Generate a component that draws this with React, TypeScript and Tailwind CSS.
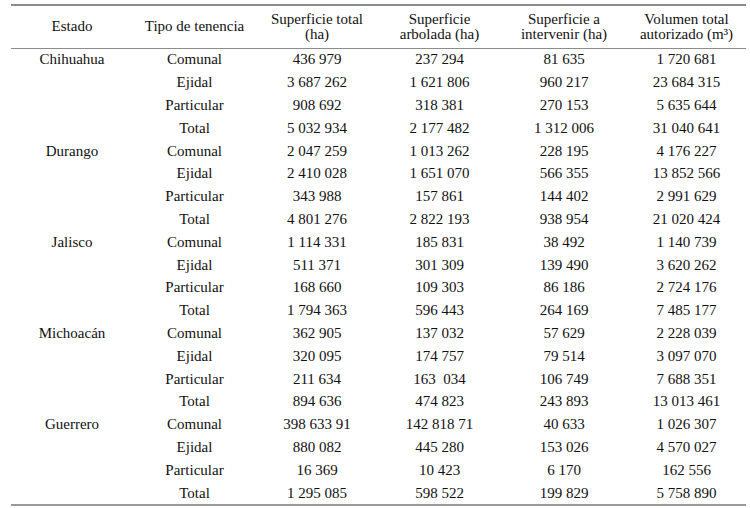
import React from "react";

type Row = [string, string, string, string, string, string];

const rows: Row[] = [
  ["Chihuahua", "Comunal", "436 979", "237 294", "81 635", "1 720 681"],
  ["", "Ejidal", "3 687 262", "1 621 806", "960 217", "23 684 315"],
  ["", "Particular", "908 692", "318 381", "270 153", "5 635 644"],
  ["", "Total", "5 032 934", "2 177 482", "1 312 006", "31 040 641"],
  ["Durango", "Comunal", "2 047 259", "1 013 262", "228 195", "4 176 227"],
  ["", "Ejidal", "2 410 028", "1 651 070", "566 355", "13 852 566"],
  ["", "Particular", "343 988", "157 861", "144 402", "2 991 629"],
  ["", "Total", "4 801 276", "2 822 193", "938 954", "21 020 424"],
  ["Jalisco", "Comunal", "1 114 331", "185 831", "38 492", "1 140 739"],
  ["", "Ejidal", "511 371", "301 309", "139 490", "3 620 262"],
  ["", "Particular", "168 660", "109 303", "86 186", "2 724 176"],
  ["", "Total", "1 794 363", "596 443", "264 169", "7 485 177"],
  ["Michoacán", "Comunal", "362 905", "137 032", "57 629", "2 228 039"],
  ["", "Ejidal", "320 095", "174 757", "79 514", "3 097 070"],
  ["", "Particular", "211 634", "163  034", "106 749", "7 688 351"],
  ["", "Total", "894 636", "474 823", "243 893", "13 013 461"],
  ["Guerrero", "Comunal", "398 633 91", "142 818 71", "40 633", "1 026 307"],
  ["", "Ejidal", "880 082", "445 280", "153 026", "4 570 027"],
  ["", "Particular", "16 369", "10 423", "6 170", "162 556"],
  ["", "Total", "1 295 085", "598 522", "199 829", "5 758 890"],
];

const grid = "grid grid-cols-[122px_123px_122px_123px_126px_119px]";

export default function App() {
  return (
    <div className="w-[750px] h-[508px] bg-white text-[#111] overflow-hidden font-['Liberation_Serif','Times_New_Roman',serif]">
      <div className="ml-[11px] w-[735px] pt-[4px] text-[15px]">
        <div className="h-[1.5px] bg-[#8c8c8c]" />
        <div className={`${grid} h-[42px] items-center text-center leading-[15px]`}>
          <div>Estado</div>
          <div>Tipo de tenencia</div>
          <div>
            Superficie total
            <br />
            (ha)
          </div>
          <div>
            Superficie
            <br />
            arbolada (ha)
          </div>
          <div>
            Superficie a
            <br />
            intervenir (ha)
          </div>
          <div>
            Volumen total
            <br />
            autorizado (m³)
          </div>
        </div>
        <div className="h-px bg-[#8c8c8c]" />
        <div className="flex flex-col">
          {rows.map((r, i) => (
            <div
              key={i}
              className={`${grid} h-[22.8px] items-center text-center leading-none whitespace-pre`}
            >
              {r.map((c, j) => (
                <div key={j}>{c}</div>
              ))}
            </div>
          ))}
        </div>
        <div className="h-[2px] bg-[#9a9a9a]" />
      </div>
    </div>
  );
}
